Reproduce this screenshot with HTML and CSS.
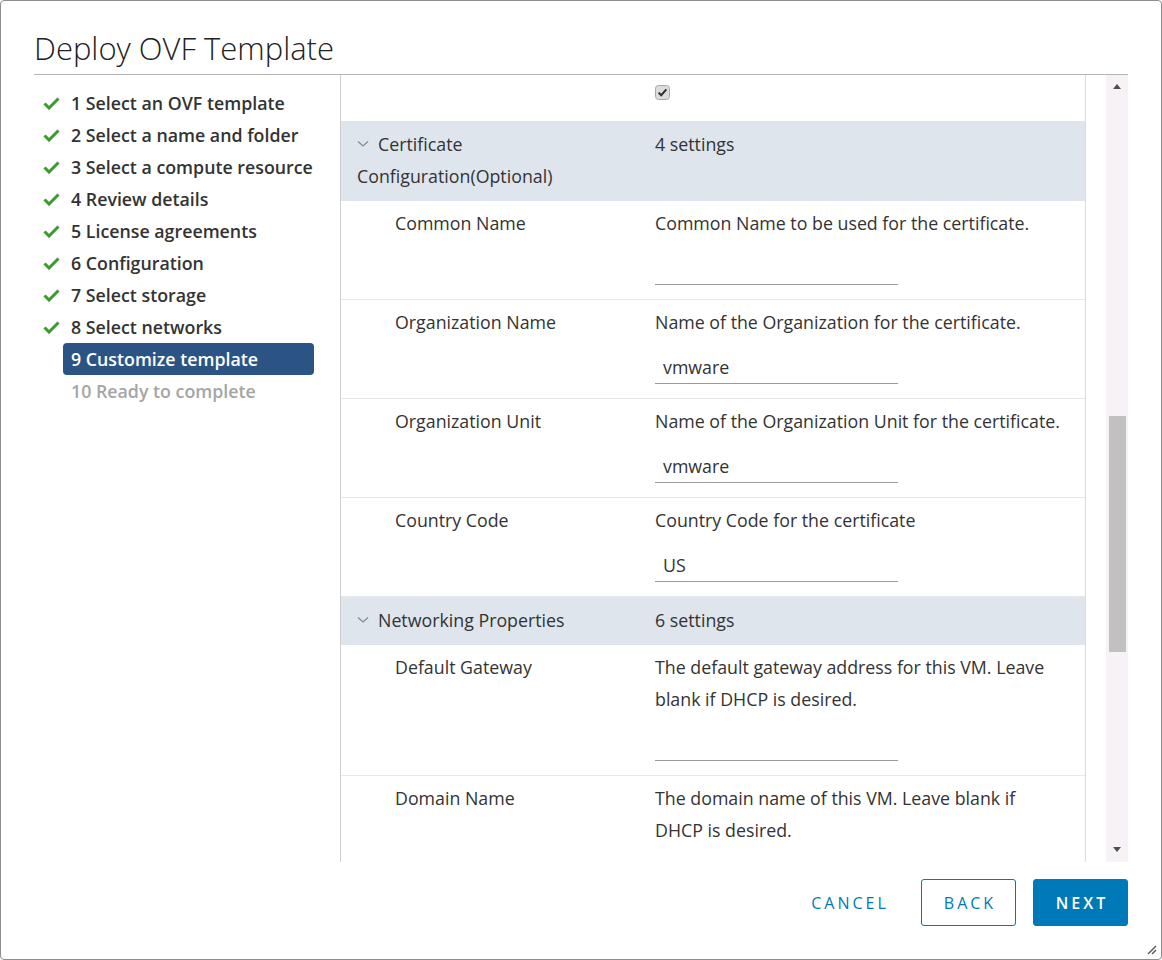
FILE: index.html
```html
<!DOCTYPE html>
<html lang="en">
  <head>
    <meta charset="UTF-8" />
    <title>Deploy OVF Template</title>
    <link rel="stylesheet" href="styles.css">
  </head>
  <body>
    <div class="dialog">
      <h1 class="dialog-title">Deploy OVF Template</h1>

      <div class="dialog-body">
        <ul class="steps">
          <li class="step done"><span class="step-icon"><svg width="17" height="13" viewBox="0 0 17 13"><path d="M1.5 6.5 L6 11 L15.5 1.5" fill="none" stroke="#3a9a2d" stroke-width="3"/></svg></span><span class="step-label">1 Select an OVF template</span></li>
          <li class="step done"><span class="step-icon"><svg width="17" height="13" viewBox="0 0 17 13"><path d="M1.5 6.5 L6 11 L15.5 1.5" fill="none" stroke="#3a9a2d" stroke-width="3"/></svg></span><span class="step-label">2 Select a name and folder</span></li>
          <li class="step done"><span class="step-icon"><svg width="17" height="13" viewBox="0 0 17 13"><path d="M1.5 6.5 L6 11 L15.5 1.5" fill="none" stroke="#3a9a2d" stroke-width="3"/></svg></span><span class="step-label">3 Select a compute resource</span></li>
          <li class="step done"><span class="step-icon"><svg width="17" height="13" viewBox="0 0 17 13"><path d="M1.5 6.5 L6 11 L15.5 1.5" fill="none" stroke="#3a9a2d" stroke-width="3"/></svg></span><span class="step-label">4 Review details</span></li>
          <li class="step done"><span class="step-icon"><svg width="17" height="13" viewBox="0 0 17 13"><path d="M1.5 6.5 L6 11 L15.5 1.5" fill="none" stroke="#3a9a2d" stroke-width="3"/></svg></span><span class="step-label">5 License agreements</span></li>
          <li class="step done"><span class="step-icon"><svg width="17" height="13" viewBox="0 0 17 13"><path d="M1.5 6.5 L6 11 L15.5 1.5" fill="none" stroke="#3a9a2d" stroke-width="3"/></svg></span><span class="step-label">6 Configuration</span></li>
          <li class="step done"><span class="step-icon"><svg width="17" height="13" viewBox="0 0 17 13"><path d="M1.5 6.5 L6 11 L15.5 1.5" fill="none" stroke="#3a9a2d" stroke-width="3"/></svg></span><span class="step-label">7 Select storage</span></li>
          <li class="step done"><span class="step-icon"><svg width="17" height="13" viewBox="0 0 17 13"><path d="M1.5 6.5 L6 11 L15.5 1.5" fill="none" stroke="#3a9a2d" stroke-width="3"/></svg></span><span class="step-label">8 Select networks</span></li>
          <li class="step active"><span class="step-icon"></span><span class="step-label">9 Customize template</span></li>
          <li class="step disabled"><span class="step-icon"></span><span class="step-label">10 Ready to complete</span></li>
        </ul>

        <div class="pane">
          <div class="props">
            <div class="prop-row top-row">
              <div></div>
              <div class="prop-value">
                <span class="checkbox"><svg width="15" height="15" viewBox="0 0 15 15"><rect x="0.5" y="0.5" width="14" height="14" rx="3" fill="#dcdcdc" stroke="#a8a8a8"/><path d="M3.6 7.6 L6.2 10.2 L11.4 4.4" fill="none" stroke="#2f2f2f" stroke-width="2"/></svg></span>
              </div>
            </div>

            <div class="group-row">
              <div class="group-name"><svg class="chevron" width="12" height="8" viewBox="0 0 12 8"><path d="M1 1.5 L6 6 L11 1.5" fill="none" stroke="#8a8a8a" stroke-width="1.3"/></svg>Certificate Configuration(Optional)</div>
              <div class="group-count">4 settings</div>
            </div>

            <div class="prop-row">
              <div class="prop-label">Common Name</div>
              <div class="prop-value">
                <div class="prop-desc">Common Name to be used for the certificate.</div>
                <input class="prop-input" type="text" value="">
              </div>
            </div>

            <div class="prop-row">
              <div class="prop-label">Organization Name</div>
              <div class="prop-value">
                <div class="prop-desc">Name of the Organization for the certificate.</div>
                <input class="prop-input" type="text" value="vmware">
              </div>
            </div>

            <div class="prop-row">
              <div class="prop-label">Organization Unit</div>
              <div class="prop-value">
                <div class="prop-desc">Name of the Organization Unit for the certificate.</div>
                <input class="prop-input" type="text" value="vmware">
              </div>
            </div>

            <div class="prop-row">
              <div class="prop-label">Country Code</div>
              <div class="prop-value">
                <div class="prop-desc">Country Code for the certificate</div>
                <input class="prop-input" type="text" value="US">
              </div>
            </div>

            <div class="group-row">
              <div class="group-name"><svg class="chevron" width="12" height="8" viewBox="0 0 12 8"><path d="M1 1.5 L6 6 L11 1.5" fill="none" stroke="#8a8a8a" stroke-width="1.3"/></svg>Networking Properties</div>
              <div class="group-count">6 settings</div>
            </div>

            <div class="prop-row">
              <div class="prop-label">Default Gateway</div>
              <div class="prop-value">
                <div class="prop-desc">The default gateway address for this VM. Leave blank if DHCP is desired.</div>
                <input class="prop-input" type="text" value="">
              </div>
            </div>

            <div class="prop-row">
              <div class="prop-label">Domain Name</div>
              <div class="prop-value">
                <div class="prop-desc">The domain name of this VM. Leave blank if DHCP is desired.</div>
                <input class="prop-input" type="text" value="">
              </div>
            </div>
          </div>

          <div class="scrollbar">
            <span class="arrow-up"></span>
            <span class="thumb"></span>
            <span class="arrow-down"></span>
          </div>
        </div>
      </div>

      <div class="dialog-footer">
        <button class="btn btn-link">Cancel</button>
        <button class="btn btn-outline">Back</button>
        <button class="btn btn-primary">Next</button>
      </div>

      <!-- resize handle -->
      <svg class="resize-grip" width="12" height="12" viewBox="0 0 12 12"><path d="M11 3 L3 11 M11 7 L7 11" stroke="#555" stroke-width="1.4"/></svg>
    </div>
  </body>
</html>
```

FILE: styles.css
```css
body {
  margin: 0;
  font-family: "Open Sans", sans-serif;
  font-size: 17.8px;
  color: #333;
  background: #fff;
}
.dialog {
  position: relative;
  width: 1162px;
  height: 960px;
  box-sizing: border-box;
  border: 1px solid #8e8e8e;
  border-radius: 4px;
  padding: 0 33px;
  display: flex;
  flex-direction: column;
  background: #fff;
}
.dialog-title {
  margin: 0;
  padding: 29px 0 8px;
  font-size: 31px;
  font-weight: 300;
  line-height: 36px;
  color: #222;
  border-bottom: 1px solid #b4b4b4;
}
.dialog-body {
  display: flex;
  height: 787px;
}
.steps {
  list-style: none;
  margin: 0;
  padding: 12px 0 0;
  width: 306px;
  flex: none;
  border-right: 1px solid #cfcfcf;
}
.step {
  display: flex;
  align-items: center;
  height: 32px;
}
.step-icon {
  width: 29px;
  padding-left: 9px;
  box-sizing: border-box;
  display: flex;
}
.step-label {
  width: 251px;
  box-sizing: border-box;
  padding: 0 8px;
  line-height: 32px;
  border-radius: 4px;
  font-weight: 600;
  white-space: nowrap;
}
.step.active .step-label {
  background: #2b5485;
  color: #fff;
}
.step.disabled .step-label {
  color: #a5a5a5;
}
.pane {
  flex: 1;
  display: flex;
  justify-content: space-between;
  overflow: hidden;
}
.props {
  width: 745px;
  flex: none;
  box-sizing: border-box;
  border-right: 1px solid #dcdcdc;
  overflow: hidden;
}
.prop-row {
  display: grid;
  grid-template-columns: 314px 1fr;
  padding: 6px 0 14px;
  border-bottom: 1px solid #e8e8e8;
}
.prop-row.top-row {
  height: 46px;
  box-sizing: border-box;
  padding: 10px 0 0;
  border-bottom: none;
}
.top-row .prop-value {
  display: flex;
  align-items: flex-start;
}
.checkbox {
  display: flex;
}
.prop-label {
  padding-left: 54px;
  line-height: 32px;
}
.prop-value {
  padding-right: 20px;
}
.prop-desc {
  line-height: 32px;
}
.prop-input {
  display: block;
  margin-top: 19px;
  width: 243px;
  height: 27px;
  box-sizing: border-box;
  padding: 0 8px 6px;
  border: none;
  border-bottom: 1px solid #9b9b9b;
  font-family: inherit;
  font-size: 17.8px;
  line-height: 20px;
  color: #333;
  background: transparent;
  outline: none;
}
.group-row {
  display: grid;
  grid-template-columns: 314px 1fr;
  padding: 7px 0 9px;
  background: #dee5ed;
  line-height: 32px;
  font-weight: 500;
}
.group-name {
  padding: 0 12px 0 16px;
}
.chevron {
  margin-right: 9px;
  vertical-align: 3px;
}
.scrollbar {
  width: 22px;
  flex: none;
  background: #f7f2f5;
  display: flex;
  flex-direction: column;
  align-items: center;
}
.arrow-up {
  margin-top: 9px;
  border-left: 4px solid transparent;
  border-right: 4px solid transparent;
  border-bottom: 5px solid #4f4f4f;
}
.thumb {
  margin-top: 327px;
  width: 17px;
  height: 236px;
  background: #c1c1c1;
}
.arrow-down {
  margin-top: auto;
  margin-bottom: 10px;
  border-left: 4px solid transparent;
  border-right: 4px solid transparent;
  border-top: 5px solid #4f4f4f;
}
.dialog-footer {
  display: flex;
  justify-content: flex-end;
  gap: 17px;
  padding-top: 17px;
}
.btn {
  width: 95px;
  height: 47px;
  padding: 0 0 0 3px;
  border: 1px solid #0079b8;
  border-radius: 3px;
  font-family: "Open Sans", sans-serif;
  font-size: 16px;
  font-weight: 600;
  letter-spacing: 3px;
  text-transform: uppercase;
  cursor: pointer;
}
.btn-link {
  margin-right: 8px;
  border-color: transparent;
  background: transparent;
  color: #0079b8;
  font-weight: 500;
}
.btn-outline {
  background: #fff;
  color: #0079b8;
  font-weight: 500;
}
.btn-primary {
  background: #0079b8;
  color: #fff;
}
.resize-grip {
  position: absolute;
  right: 4px;
  bottom: 4px;
}
```
